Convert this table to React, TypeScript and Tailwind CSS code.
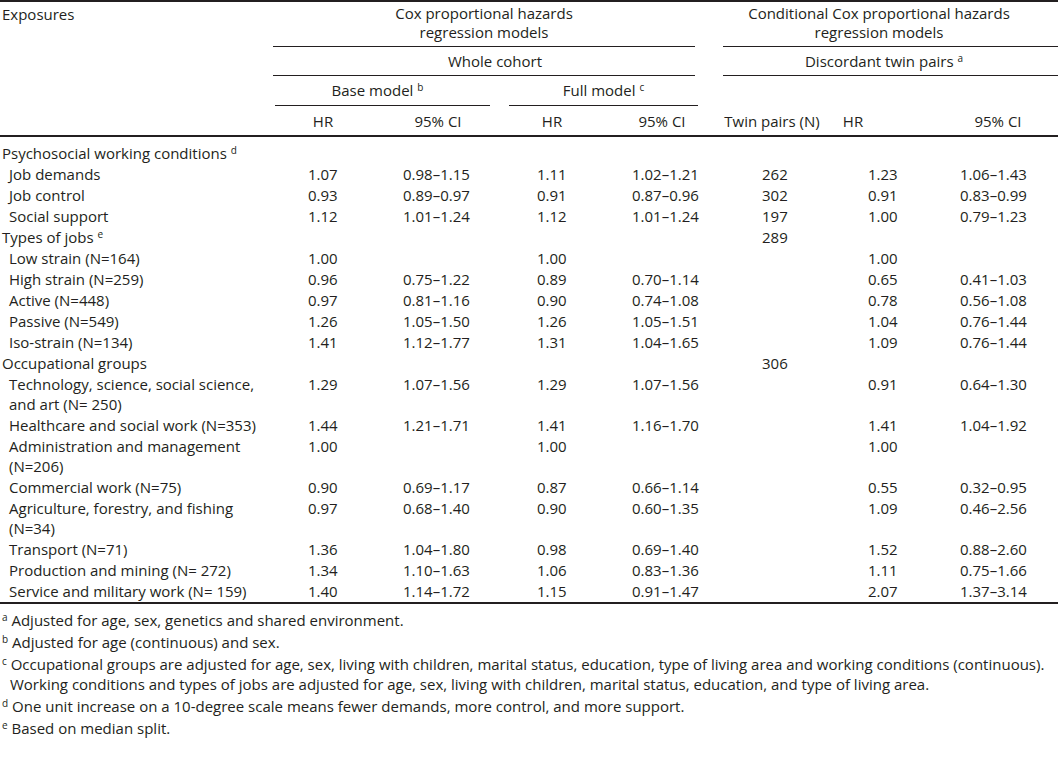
type Row = {
  label: React.ReactNode;
  group?: boolean;
  cells?: string[];
};

const Sup = ({ children }: { children: React.ReactNode }) => (
  <span className="relative -top-[5px] text-[10px] leading-none">{children}</span>
);

const rows: Row[] = [
  { label: <>Psychosocial working conditions <Sup>d</Sup></>, group: true },
  { label: "Job demands", cells: ["1.07", "0.98–1.15", "1.11", "1.02–1.21", "262", "1.23", "1.06–1.43"] },
  { label: "Job control", cells: ["0.93", "0.89–0.97", "0.91", "0.87–0.96", "302", "0.91", "0.83–0.99"] },
  { label: "Social support", cells: ["1.12", "1.01–1.24", "1.12", "1.01–1.24", "197", "1.00", "0.79–1.23"] },
  { label: <>Types of jobs <Sup>e</Sup></>, group: true, cells: ["", "", "", "", "289", "", ""] },
  { label: "Low strain (N=164)", cells: ["1.00", "", "1.00", "", "", "1.00", ""] },
  { label: "High strain (N=259)", cells: ["0.96", "0.75–1.22", "0.89", "0.70–1.14", "", "0.65", "0.41–1.03"] },
  { label: "Active (N=448)", cells: ["0.97", "0.81–1.16", "0.90", "0.74–1.08", "", "0.78", "0.56–1.08"] },
  { label: "Passive (N=549)", cells: ["1.26", "1.05–1.50", "1.26", "1.05–1.51", "", "1.04", "0.76–1.44"] },
  { label: "Iso-strain (N=134)", cells: ["1.41", "1.12–1.77", "1.31", "1.04–1.65", "", "1.09", "0.76–1.44"] },
  { label: "Occupational groups", group: true, cells: ["", "", "", "", "306", "", ""] },
  {
    label: <>Technology, science, social science,<br />and art (N= 250)</>,
    cells: ["1.29", "1.07–1.56", "1.29", "1.07–1.56", "", "0.91", "0.64–1.30"],
  },
  { label: "Healthcare and social work (N=353)", cells: ["1.44", "1.21–1.71", "1.41", "1.16–1.70", "", "1.41", "1.04–1.92"] },
  { label: <>Administration and management<br />(N=206)</>, cells: ["1.00", "", "1.00", "", "", "1.00", ""] },
  { label: "Commercial work (N=75)", cells: ["0.90", "0.69–1.17", "0.87", "0.66–1.14", "", "0.55", "0.32–0.95"] },
  {
    label: <>Agriculture, forestry, and fishing<br />(N=34)</>,
    cells: ["0.97", "0.68–1.40", "0.90", "0.60–1.35", "", "1.09", "0.46–2.56"],
  },
  { label: "Transport (N=71)", cells: ["1.36", "1.04–1.80", "0.98", "0.69–1.40", "", "1.52", "0.88–2.60"] },
  { label: "Production and mining (N= 272)", cells: ["1.34", "1.10–1.63", "1.06", "0.83–1.36", "", "1.11", "0.75–1.66"] },
  { label: "Service and military work (N= 159)", cells: ["1.40", "1.14–1.72", "1.15", "0.91–1.47", "", "2.07", "1.37–3.14"] },
];

export default function App() {
  return (
    <div className="min-h-[757px] w-[1061px] overflow-hidden bg-white text-[15px] leading-[20px] text-[#231f20] [font-family:'Open_Sans',sans-serif]">
      {/* Header */}
      <div className="w-[1058px] border-t-2 border-b-2 border-[#231f20]">
        <div className="flex">
          <div className="w-[273px] pl-[2px] pt-[2px]">Exposures</div>
          <div className="w-[422px] border-b border-[#231f20] pt-[2px] pb-[4px] text-center leading-[19px]">
            Cox proportional hazards
            <br />
            regression models
          </div>
          <div className="w-[28px]" />
          <div className="flex-1 border-b border-[#231f20] pt-[2px] pb-[4px] leading-[19px]">
            <div className="w-[312px] text-center">
              Conditional Cox proportional hazards
              <br />
              regression models
            </div>
          </div>
        </div>
        <div className="flex">
          <div className="w-[273px]" />
          <div className="w-[422px] border-b border-[#231f20] pt-[4px] pb-[4px] pl-[22px] text-center">Whole cohort</div>
          <div className="w-[28px]" />
          <div className="flex-1 border-b border-[#231f20] pt-[4px] pb-[4px]">
            <div className="w-[322px] text-center">
              Discordant twin pairs <Sup>a</Sup>
            </div>
          </div>
        </div>
        <div className="flex">
          <div className="w-[275px]" />
          <div className="w-[215px] border-b border-[#231f20] pt-[4px] pb-[5px] pr-[10px] text-center">
            Base model <Sup>b</Sup>
          </div>
          <div className="w-[19px]" />
          <div className="w-[189px] border-b border-[#231f20] pt-[4px] pb-[5px] text-center">
            Full model <Sup>c</Sup>
          </div>
        </div>
        <div className="flex pt-[5px] pb-[4px]">
          <div className="ml-[283px] w-[80px] text-center">HR</div>
          <div className="ml-[35px] w-[80px] text-center">95% CI</div>
          <div className="ml-[34px] w-[80px] text-center">HR</div>
          <div className="ml-[30px] w-[80px] text-center">95% CI</div>
          <div className="ml-[10px] w-[120px] text-center">Twin pairs (N)</div>
          <div className="ml-[1px] w-[40px] text-center">HR</div>
          <div className="ml-[75px] w-[100px] text-center">95% CI</div>
        </div>
      </div>

      {/* Body */}
      <div className="w-[1058px] border-b-2 border-[#231f20] pt-[5px] pb-[1px]">
        {rows.map((r, i) => (
          <div
            key={i}
            className="grid grid-cols-[308px_95px_134px_95px_130px_106px_92px_1fr] py-[0.5px]"
          >
            <div className={r.group ? "pl-[2px]" : "pl-[9px]"}>{r.label}</div>
            {(r.cells ?? ["", "", "", "", "", "", ""]).map((c, j) => (
              <div key={j}>{c}</div>
            ))}
          </div>
        ))}
      </div>

      {/* Footnotes */}
      <div className="space-y-[2px] pt-[6px] pl-[2px] whitespace-nowrap">
        <p>
          <Sup>a</Sup> Adjusted for age, sex, genetics and shared environment.
        </p>
        <p>
          <Sup>b</Sup> Adjusted for age (continuous) and sex.
        </p>
        <p>
          <Sup>c</Sup> Occupational groups are adjusted for age, sex, living with children, marital status, education, type
          of living area and working conditions (continuous).
          <br />
          <span className="pl-[8px]">
            Working conditions and types of jobs are adjusted for age, sex, living with children, marital status,
            education, and type of living area.
          </span>
        </p>
        <p>
          <Sup>d</Sup> One unit increase on a 10-degree scale means fewer demands, more control, and more support.
        </p>
        <p>
          <Sup>e</Sup> Based on median split.
        </p>
      </div>
    </div>
  );
}
